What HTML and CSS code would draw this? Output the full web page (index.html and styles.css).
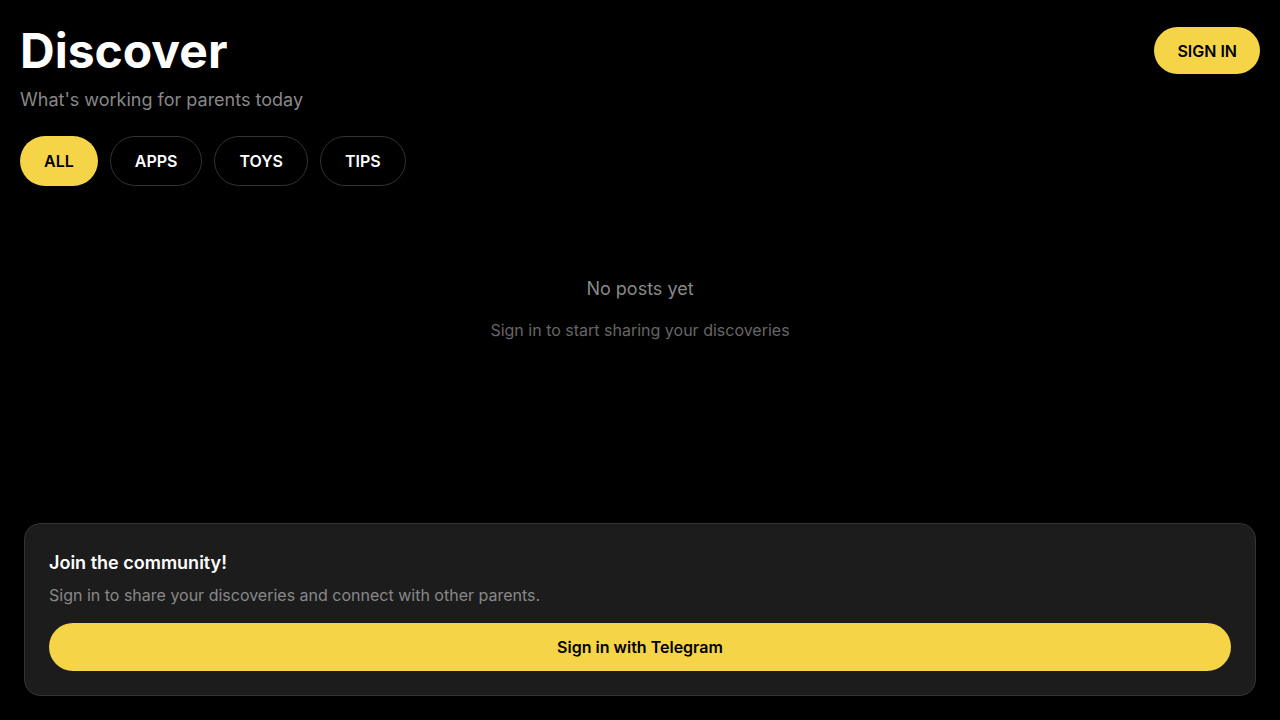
FILE: index.html
```html
<!DOCTYPE html>
<html lang="en">
<head>
<meta charset="utf-8">
<title>Discover</title>
<link rel="stylesheet" href="styles.css">
</head>
<body>
<div class="page">
  <header class="header">
    <div class="heading">
      <h1 class="title">Discover</h1>
      <p class="subtitle">What's working for parents today</p>
    </div>
    <button class="btn-signin">SIGN IN</button>
  </header>
  <nav class="chips">
    <button class="chip chip-active">ALL</button>
    <button class="chip">APPS</button>
    <button class="chip">TOYS</button>
    <button class="chip">TIPS</button>
  </nav>
  <section class="empty">
    <p class="empty-title">No posts yet</p>
    <p class="empty-text">Sign in to start sharing your discoveries</p>
  </section>
</div>
<aside class="join">
  <h2 class="join-title">Join the community!</h2>
  <p class="join-text">Sign in to share your discoveries and connect with other parents.</p>
  <button class="btn-telegram">Sign in with Telegram</button>
</aside>
</body>
</html>
```

FILE: styles.css
```css
* { box-sizing: border-box; }
html, body { margin: 0; padding: 0; background: #000; }
body {
  font-family: Inter, "Noto Sans", sans-serif;
  color: #fff;
  -webkit-font-smoothing: antialiased;
}
button { font-family: inherit; cursor: pointer; }
.page { padding: 20px; }
.header {
  display: flex;
  justify-content: space-between;
  align-items: flex-start;
}
.title {
  margin: 0;
  font-size: 48px;
  font-weight: 700;
  line-height: 62px;
}
.subtitle {
  margin: 6px 0 0;
  font-size: 18px;
  line-height: 24px;
  color: #888;
}
.btn-signin {
  margin-top: 7px;
  height: 47px;
  padding: 0 23px;
  border: none;
  border-radius: 24px;
  background: #f5d547;
  color: #000;
  font-size: 16px;
  font-weight: 600;
}
.chips {
  display: flex;
  gap: 12px;
  margin-top: 24px;
}
.chip {
  height: 50px;
  padding: 0 24px;
  border-radius: 25px;
  border: 1px solid #333;
  background: #000;
  color: #fff;
  font-size: 16px;
  font-weight: 600;
}
.chip-active {
  background: #f5d547;
  border: none;
  color: #000;
}
.empty {
  text-align: center;
  padding-top: 91px;
}
.empty-title {
  margin: 0;
  font-size: 18px;
  line-height: 24px;
  color: #888;
}
.empty-text {
  margin: 17px 0 0;
  font-size: 16px;
  line-height: 24px;
  color: #666;
}
.join {
  position: fixed;
  left: 24px;
  right: 24px;
  bottom: 24px;
  padding: 27px 24px 24px;
  background: #1c1c1c;
  border: 1px solid #333;
  border-radius: 16px;
}
.join-title {
  margin: 0;
  font-size: 18px;
  line-height: 24px;
  font-weight: 600;
}
.join-text {
  margin: 8px 0 16px;
  font-size: 16px;
  line-height: 24px;
  color: #888;
}
.btn-telegram {
  display: block;
  width: 100%;
  height: 48px;
  border: none;
  border-radius: 24px;
  background: #f5d547;
  color: #000;
  font-size: 16px;
  font-weight: 600;
}
```
